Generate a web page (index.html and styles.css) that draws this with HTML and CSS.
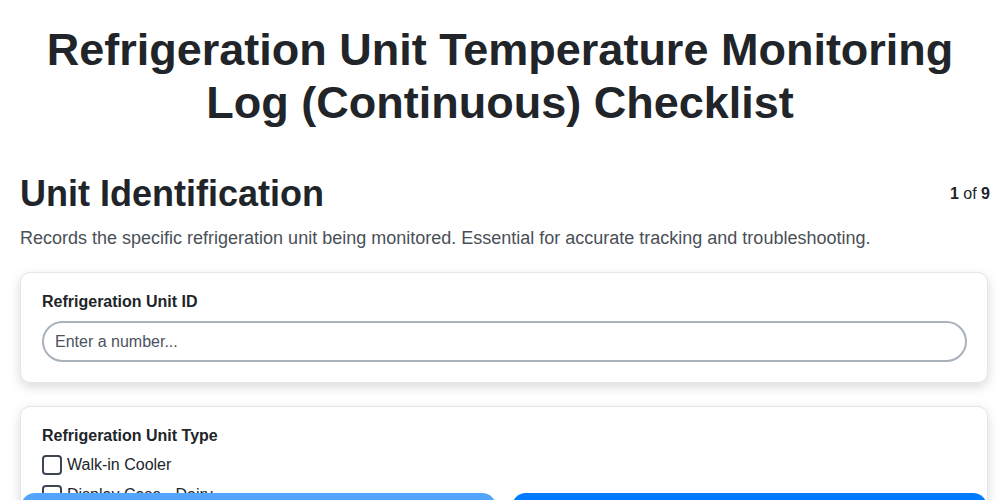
FILE: index.html
```html
<!DOCTYPE html>
<html lang="en">
<head>
    <meta charset="UTF-8">
    <meta name="viewport" content="width=device-width, initial-scale=1.0">
    <title>Refrigeration Unit Temperature Monitoring Log (Continuous) Checklist</title>
    <link rel="stylesheet" href="styles.css">
</head>
<body>
    <h1 id="pageTitle">Refrigeration Unit Temperature Monitoring Log (Continuous) Checklist</h1>

    <main id="checklist">
        <div class="sectionHeader">
            <h2>Unit Identification</h2>
            <span class="progress"><strong>1</strong> of <strong>9</strong></span>
        </div>
        <p class="sectionDesc">Records the specific refrigeration unit being monitored. Essential for accurate tracking and troubleshooting.</p>

        <div class="card">
            <label class="fieldLabel" for="unitId">Refrigeration Unit ID</label>
            <input type="text" id="unitId" class="textInput" placeholder="Enter a number...">
        </div>

        <div class="card">
            <span class="fieldLabel">Refrigeration Unit Type</span>
            <label class="checkRow"><input type="checkbox"><span>Walk-in Cooler</span></label>
            <label class="checkRow"><input type="checkbox"><span>Display Case - Dairy</span></label>
            <label class="checkRow"><input type="checkbox"><span>Display Case - Meat</span></label>
            <label class="checkRow"><input type="checkbox"><span>Reach-in Freezer</span></label>
        </div>
    </main>

    <div id="navBar">
        <button class="navBtn prev">Previous</button>
        <button class="navBtn next">Next</button>
    </div>
</body>
</html>
```

FILE: styles.css
```css
* {
    margin: 0;
    padding: 0;
    box-sizing: border-box;
}
body {
    font-family: 'Liberation Sans', Arial, sans-serif;
    background-color: #fff;
    color: #212529;
}
#pageTitle {
    font-size: 45px;
    line-height: 53px;
    font-weight: bold;
    text-align: center;
    padding: 23px 40px 0;
    margin-bottom: 45px;
}
#checklist {
    padding: 0 12px 120px 20px;
}
.sectionHeader {
    display: flex;
    justify-content: space-between;
    align-items: center;
    margin-right: -2px;
}
.sectionHeader h2 {
    font-size: 36px;
    line-height: 40px;
    font-weight: bold;
}
.progress {
    font-size: 16px;
}
.sectionDesc {
    font-size: 18px;
    line-height: 24px;
    color: #495057;
    margin: 12px 0 22px;
}
.card {
    display: flex;
    flex-direction: column;
    background-color: #fff;
    border: 1px solid #e5e5ec;
    border-radius: 10px;
    box-shadow: 0 4px 12px rgba(0, 0, 0, 0.15);
    padding: 20px 20px 20px 21px;
    margin-bottom: 23px;
}
.fieldLabel {
    font-size: 16px;
    font-weight: bold;
    margin-bottom: 10px;
}
.textInput {
    height: 41px;
    border: 2px solid #a9b1ba;
    border-radius: 21px;
    padding: 0 11px;
    font-family: inherit;
    font-size: 16px;
    color: #212529;
    outline: none;
}
.textInput::placeholder {
    color: #4b5262;
}
.checkRow {
    display: flex;
    align-items: center;
    gap: 5px;
    font-size: 16px;
    margin-bottom: 10px;
}
.checkRow input {
    appearance: none;
    width: 20px;
    height: 20px;
    border: 2px solid #3d4452;
    border-radius: 4px;
    background-color: #fff;
}
#navBar {
    position: fixed;
    left: 21px;
    right: 13px;
    bottom: -43px;
    display: flex;
    gap: 16px;
}
.navBtn {
    flex: 1;
    height: 50px;
    border: none;
    border-radius: 14px;
    font-family: inherit;
    font-size: 16px;
    color: #fff;
    cursor: pointer;
}
.navBtn.prev {
    background-color: #52a5fa;
}
.navBtn.next {
    background-color: #007bff;
}
```
